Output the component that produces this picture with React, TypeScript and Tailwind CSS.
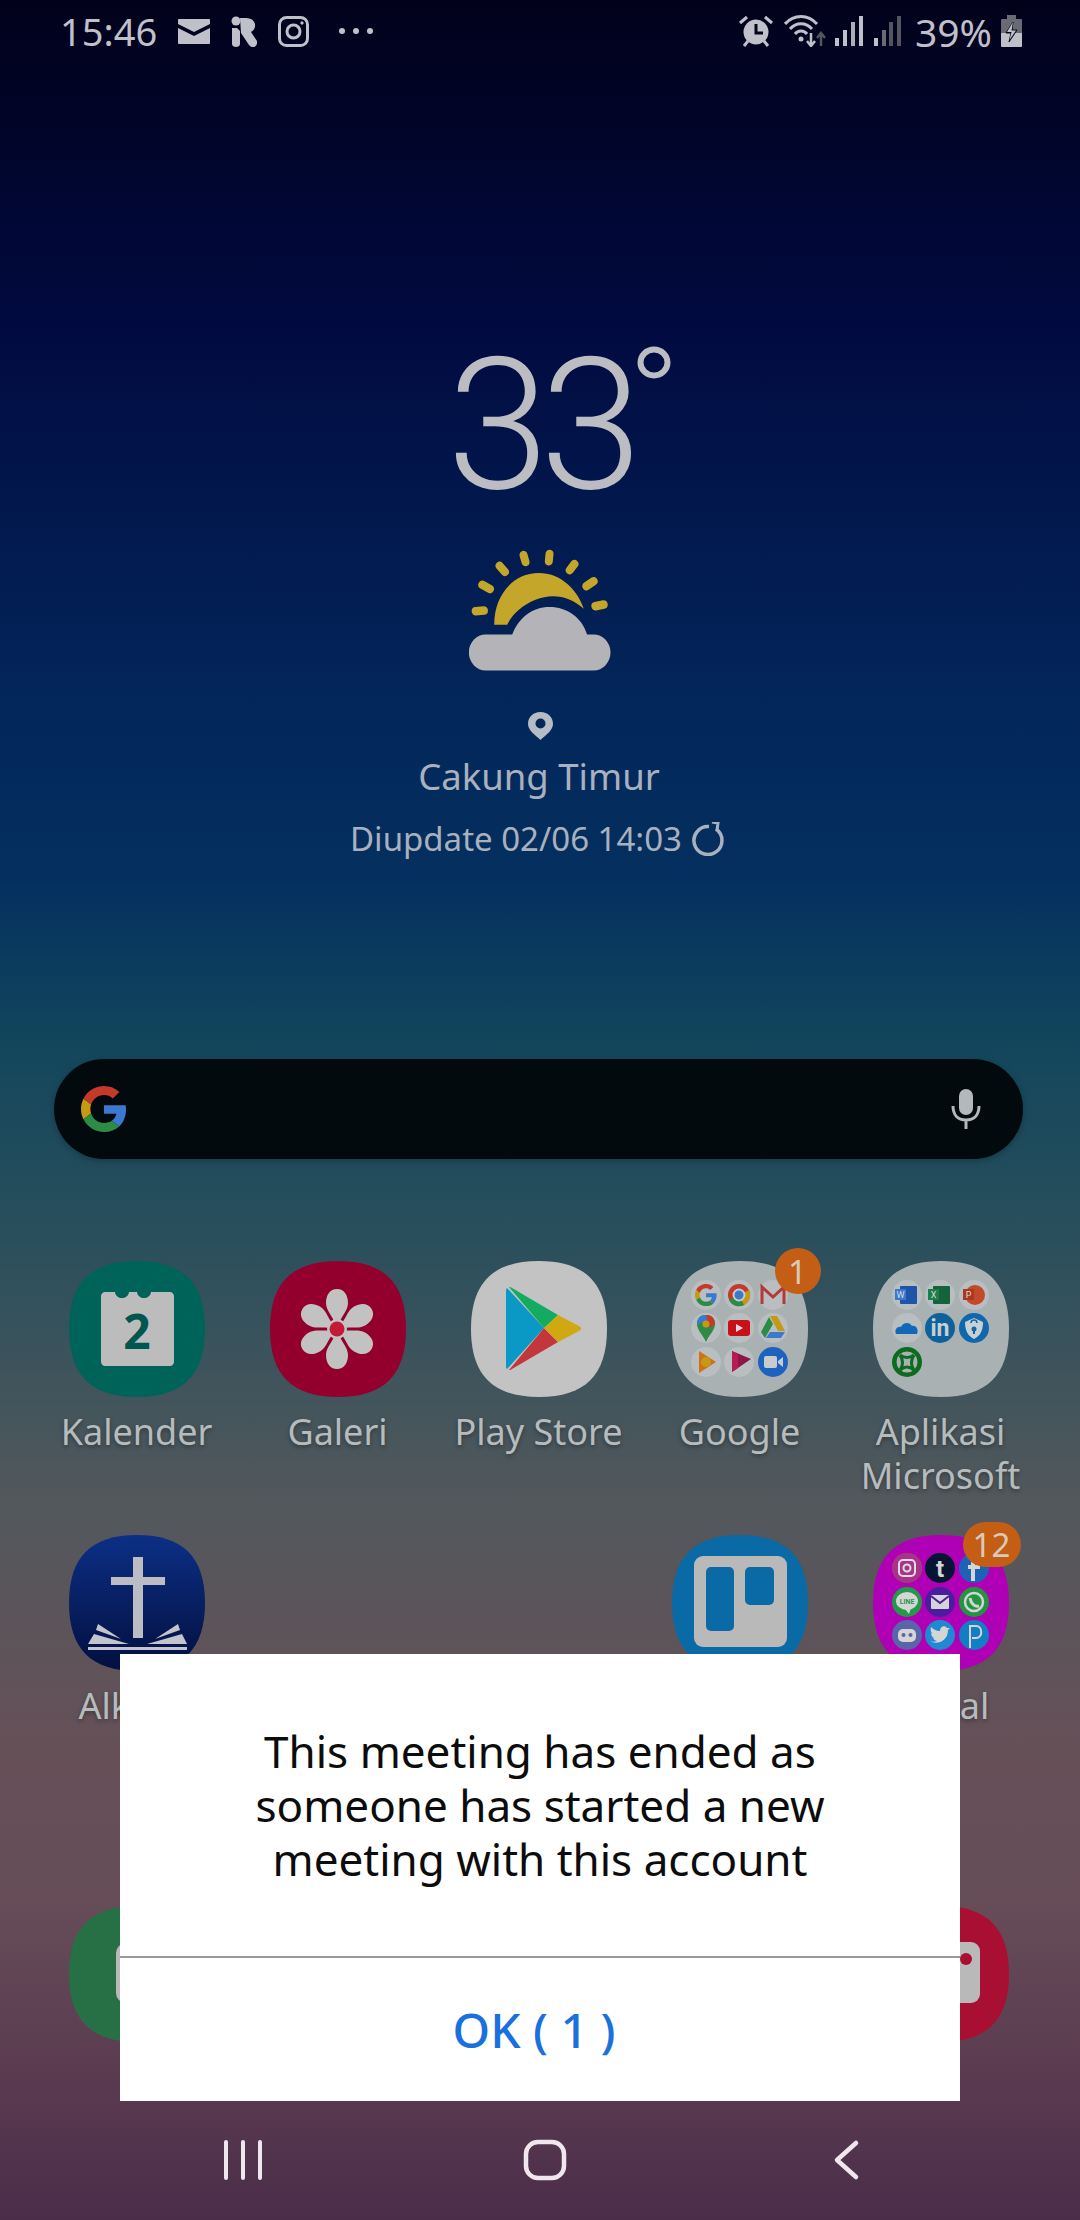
import React from "react";

const Squircle = ({ fill }: { fill: string }) => (
  <path d="M68 0C114 0 136 22 136 68C136 114 114 136 68 136C22 136 0 114 0 68C0 22 22 0 68 0Z" fill={fill} />
);

const GoogleG = ({ size }: { size: number }) => (
  <svg width={size} height={size} viewBox="0 0 48 48">
    <path fill="#c5392b" d="M24 9.5c3.54 0 6.71 1.22 9.21 3.6l6.85-6.85C35.9 2.38 30.47 0 24 0 14.62 0 6.51 5.38 2.56 13.22l7.98 6.19C12.43 13.72 17.74 9.5 24 9.5z" />
    <path fill="#3b78d0" d="M46.98 24.55c0-1.57-.15-3.09-.38-4.55H24v9.02h12.94c-.58 2.96-2.26 5.48-4.78 7.18l7.73 6c4.51-4.18 7.09-10.36 7.09-17.65z" />
    <path fill="#c39a12" d="M10.53 28.59c-.48-1.45-.76-2.99-.76-4.59s.27-3.14.76-4.59l-7.98-6.19C.92 16.46 0 20.12 0 24c0 3.88.92 7.54 2.56 10.78l7.97-6.19z" />
    <path fill="#2e8b45" d="M24 48c6.48 0 11.93-2.13 15.89-5.81l-7.73-6c-2.15 1.45-4.92 2.3-8.16 2.3-6.26 0-11.57-4.22-13.47-9.91l-7.98 6.19C6.51 42.62 14.62 48 24 48z" />
  </svg>
);

const Icon = ({ children }: { children: React.ReactNode }) => (
  <svg width={136} height={136} viewBox="0 0 136 136" className="block">
    {children}
  </svg>
);

const Kalender = () => (
  <Icon>
    <Squircle fill="#00635a" />
    <path d="M36 31h10c1 8 13 8 14 0h8c1 8 13 8 14 0h19c2 0 4 2 4 4v66c0 2-2 4-4 4H36c-2 0-4-2-4-4V35c0-2 2-4 4-4Z" fill="#bcbcbc" />
    <text x="68" y="88" textAnchor="middle" fontSize="48" fontWeight="700" fontFamily="'Noto Sans', sans-serif" fill="#00574f">2</text>
  </Icon>
);

const Galeri = () => (
  <Icon>
    <Squircle fill="#93002e" />
    {[0, 60, 120, 180, 240, 300].map((r) => (
      <path key={r} d="M67 28C74 28 78 34 78 42C78 50 71 55 69 63H65C63 55 56 50 56 42C56 34 60 28 67 28Z" fill="#c2c2c2" transform={`rotate(${r} 67 68)`} />
    ))}
    <circle cx="67" cy="68" r="10" fill="#c2c2c2" />
    <circle cx="67" cy="68" r="7.5" fill="#c41a38" />
  </Icon>
);

const Play = () => (
  <Icon>
    <Squircle fill="#c3c3c3" />
    <path d="M36 27C35 28 35 29 35 31V104C35 106 35 107 36 108L73 67Z" fill="#0a98c4" />
    <path d="M38 26C39 26 40 26 41 27L87 54L73 67Z" fill="#13ab60" />
    <path d="M73 67L38 109C39 109 40 109 41 108L87 81Z" fill="#c3363c" />
    <path d="M87 54L108 65C111 67 111 68 108 70L87 81L73 67Z" fill="#d0a812" />
  </Icon>
);

const Mini = ({ x, y, fill = "#b9bec0", children }: { x: number; y: number; fill?: string; children?: React.ReactNode }) => (
  <g transform={`translate(${x} ${y})`}>
    <circle r="15" fill={fill} />
    {children}
  </g>
);

const GoogleFolder = () => (
  <Icon>
    <Squircle fill="#a9b1b3" />
    <Mini x={34} y={34}>
      <g transform="translate(-11 -11) scale(0.46)">
        <path fill="#c5392b" d="M24 9.5c3.54 0 6.71 1.22 9.21 3.6l6.85-6.85C35.9 2.38 30.47 0 24 0 14.62 0 6.51 5.38 2.56 13.22l7.98 6.19C12.43 13.72 17.74 9.5 24 9.5z" />
        <path fill="#3b78d0" d="M46.98 24.55c0-1.57-.15-3.09-.38-4.55H24v9.02h12.94c-.58 2.96-2.26 5.48-4.78 7.18l7.73 6c4.51-4.18 7.09-10.36 7.09-17.65z" />
        <path fill="#c39a12" d="M10.53 28.59c-.48-1.45-.76-2.99-.76-4.59s.27-3.14.76-4.59l-7.98-6.19C.92 16.46 0 20.12 0 24c0 3.88.92 7.54 2.56 10.78l7.97-6.19z" />
        <path fill="#2e8b45" d="M24 48c6.48 0 11.93-2.13 15.89-5.81l-7.73-6c-2.15 1.45-4.92 2.3-8.16 2.3-6.26 0-11.57-4.22-13.47-9.91l-7.98 6.19C6.51 42.62 14.62 48 24 48z" />
      </g>
    </Mini>
    <Mini x={67} y={34}>
      <circle r="11" fill="#c5392b" />
      <path d="M0 0L-10 5A11 11 0 0 0 5 10Z" fill="#2e8b45" />
      <path d="M0 0L5 10A11 11 0 0 0 10 -5Z" fill="#c39a12" />
      <circle r="5.5" fill="#3b78d0" stroke="#c9cccc" strokeWidth="2" />
    </Mini>
    <Mini x={101} y={34}>
      <path d="M-11 9V-8L0 2L11 -8V9" fill="none" stroke="#b5383a" strokeWidth="3" />
    </Mini>
    <Mini x={34} y={67}>
      <path d="M0 -13C-7 -13 -9 -8 -9 -4C-9 2 -3 7 0 14C3 7 9 2 9 -4C9 -8 7 -13 0 -13Z" fill="#2e8b45" />
      <path d="M-9 -4C-9 -8 -7 -13 0 -13L4 -7Z" fill="#3b78d0" />
      <path d="M0 -13C7 -13 9 -8 9 -4L3 0Z" fill="#c5392b" />
      <circle cy="-4" r="3.5" fill="#c39a12" />
    </Mini>
    <Mini x={67} y={67}>
      <rect x="-11" y="-8" width="22" height="16" rx="3" fill="#c8101a" />
      <path d="M-3 -4L4 0L-3 4Z" fill="#ddd" />
    </Mini>
    <Mini x={101} y={67}>
      <path d="M-3 -12H4L12 3H5Z" fill="#c39a12" />
      <path d="M-4 -11L-12 4L-8 10L0 -4Z" fill="#2e8b45" />
      <path d="M-7 10H8L12 4H-3Z" fill="#3b78d0" />
    </Mini>
    <Mini x={34} y={101}>
      <path d="M-7 -11L10 0L-7 11Z" fill="#d0701a" />
      <circle cx="0" cy="0" r="5" fill="#c39a12" />
    </Mini>
    <Mini x={67} y={101}>
      <path d="M-7 -11L12 -3L-7 10Z" fill="#8d1548" />
      <path d="M-7 -11L-1 -7V6L-7 10Z" fill="#b51c55" />
    </Mini>
    <Mini x={101} y={101} fill="#1e62bf">
      <rect x="-9" y="-6" width="13" height="12" rx="2" fill="#c9cccc" />
      <path d="M5 -1L10 -5V5L5 1Z" fill="#c9cccc" />
    </Mini>
  </Icon>
);

const MsFolder = () => (
  <Icon>
    <Squircle fill="#a9b1b3" />
    <Mini x={34} y={34}>
      <rect x="-7" y="-9" width="17" height="18" rx="1" fill="#1f55a8" />
      <rect x="-12" y="-6" width="11" height="11" fill="#3b78d0" />
      <text x="-6.500" y="3" textAnchor="middle" fontSize="9" fill="#ddd" fontFamily="Roboto, sans-serif">W</text>
    </Mini>
    <Mini x={67} y={34}>
      <rect x="-7" y="-9" width="17" height="18" rx="1" fill="#14633a" />
      <rect x="-12" y="-6" width="11" height="11" fill="#1b7f4a" />
      <text x="-6.500" y="3" textAnchor="middle" fontSize="9" fill="#ddd" fontFamily="Roboto, sans-serif">X</text>
    </Mini>
    <Mini x={101} y={34}>
      <circle cx="1" r="10" fill="#c24a2a" />
      <rect x="-11" y="-6" width="11" height="11" fill="#a8391c" />
      <text x="-5.500" y="3" textAnchor="middle" fontSize="9" fill="#ddd" fontFamily="Roboto, sans-serif">P</text>
    </Mini>
    <Mini x={34} y={67}>
      <path d="M-11 6C-13 1 -9 -2 -6 -1C-4 -6 3 -6 5 -2C9 -3 12 2 10 6Z" fill="#1268b8" />
    </Mini>
    <Mini x={67} y={67} fill="#0d629c">
      <text x="0" y="8" textAnchor="middle" fontSize="23" fontWeight="700" fill="#c9d0d3" fontFamily="Roboto, sans-serif">in</text>
    </Mini>
    <Mini x={101} y={67} fill="#0f67ae">
      <path d="M0 -10L9 -6C9 3 6 8 0 11C-6 8 -9 3 -9 -6Z" fill="#c9d0d3" />
      <circle cy="1" r="2.500" fill="#0f67ae" />
      <rect x="-1" y="1" width="2" height="5" fill="#0f67ae" />
      <path d="M-3 -5A3 3 0 0 1 3 -5" stroke="#0f67ae" strokeWidth="1.600" fill="none" />
    </Mini>
    <Mini x={34} y={101} fill="#0c6b1e">
      <circle r="10.500" fill="#a9b1b3" />
      <path d="M-7 -7Q0 -2 7 -7M-7 8Q0 2 7 8M-7 -7Q-2 1 -7 8M7 -7Q2 1 7 8" stroke="#0c6b1e" strokeWidth="3" fill="none" />
    </Mini>
  </Icon>
);

const Alkitab = () => (
  <Icon>
    <defs>
      <linearGradient id="alk" x1="0" y1="0" x2="0" y2="1">
        <stop offset="0" stopColor="#0c2f85" />
        <stop offset="1" stopColor="#030f3f" />
      </linearGradient>
    </defs>
    <Squircle fill="url(#alk)" />
    <rect x="64" y="22" width="10" height="81" fill="#bcbcc4" />
    <rect x="42" y="42" width="54" height="8" fill="#bcbcc4" />
    <path d="M25 99L60 109H19Z" fill="#c4c4cc" />
    <path d="M29 89L52 104L27 95Z" fill="#c4c4cc" />
    <path d="M113 99L78 109H118Z" fill="#c4c4cc" />
    <path d="M109 89L86 104L111 95Z" fill="#c4c4cc" />
    <rect x="19" y="112" width="99" height="3" fill="#c4c4cc" />
  </Icon>
);

const Trello = () => (
  <Icon>
    <Squircle fill="#0a6aa6" />
    <rect x="22" y="21" width="93" height="91" rx="9" fill="#b9b9b9" />
    <rect x="34" y="32" width="28" height="64" rx="5" fill="#0a6aa6" />
    <rect x="73" y="32" width="29" height="38" rx="5" fill="#0a6aa6" />
  </Icon>
);

const SocialFolder = () => (
  <Icon>
    <Squircle fill="#b000b6" />
    <Mini x={34} y={33} fill="#b35a2a">
      <circle r="15" fill="#a8348a" />
      <rect x="-8" y="-8" width="16" height="16" rx="4" fill="none" stroke="#ddd" strokeWidth="2" />
      <circle r="3.500" fill="none" stroke="#ddd" strokeWidth="2" />
    </Mini>
    <Mini x={67} y={33} fill="#051433">
      <text x="0" y="9" textAnchor="middle" fontSize="24" fontWeight="700" fill="#d5d5d5" fontFamily="Roboto, sans-serif">t</text>
    </Mini>
    <Mini x={101} y={33} fill="#1c63b8">
      <path d="M-1 13V-4C-1 -8 2 -10 6 -9M-6 -1H6" fill="none" stroke="#d5d5d5" strokeWidth="4" />
    </Mini>
    <Mini x={34} y={67} fill="#239a49">
      <ellipse rx="11" ry="9" cy="-1" fill="#d5d5d5" />
      <path d="M-2 7L2 12L4 6Z" fill="#d5d5d5" />
      <text x="0" y="2" textAnchor="middle" fontSize="7" fontWeight="700" fill="#239a49" fontFamily="Roboto, sans-serif">LINE</text>
    </Mini>
    <Mini x={67} y={67} fill="#4a1da0">
      <rect x="-9" y="-7" width="18" height="14" rx="1" fill="#d5d5d5" />
      <path d="M-9 -6L0 1L9 -6" fill="none" stroke="#4a1da0" strokeWidth="2" />
    </Mini>
    <Mini x={101} y={67} fill="#20963f">
      <circle r="9" fill="none" stroke="#d5d5d5" strokeWidth="2.500" />
      <path d="M-4 -4C-3 2 1 5 5 4" fill="none" stroke="#d5d5d5" strokeWidth="3" />
    </Mini>
    <Mini x={34} y={100} fill="#5a64a8">
      <rect x="-9" y="-6" width="18" height="13" rx="5" fill="#d5d5d5" />
      <circle cx="-3.500" cy="0" r="2" fill="#5a64a8" />
      <circle cx="3.500" cy="0" r="2" fill="#5a64a8" />
    </Mini>
    <Mini x={67} y={100} fill="#1f8ad0">
      <path d="M-10 6C-4 10 8 7 8 -5L10 -7L7 -7C5 -10 0 -9 0 -4C-4 -4 -7 -6 -9 -8C-10 -5 -9 -2 -7 -1L-9 -2C-9 1 -7 3 -5 3L-7 3C-6 5 -4 6 -3 6C-5 7 -8 7 -10 6Z" fill="#d5d5d5" />
    </Mini>
    <Mini x={101} y={100} fill="#127fc4">
      <path d="M-4 13V-9H2C9 -9 9 3 2 3H-2" fill="none" stroke="#d5d5d5" strokeWidth="2" />
    </Mini>
  </Icon>
);

const Phone = () => (
  <Icon>
    <Squircle fill="#276f45" />
    <rect x="47" y="37" width="60" height="60" rx="10" fill="#b9b9b9" />
  </Icon>
);

const Camera = () => (
  <Icon>
    <Squircle fill="#a90f33" />
    <rect x="30" y="36" width="77" height="61" rx="9" fill="#b9b9b9" />
    <circle cx="93" cy="53" r="6" fill="#a90f33" />
  </Icon>
);

const Badge = ({ label, className }: { label: string; className: string }) => (
  <div className={`absolute flex items-center justify-center rounded-full bg-[#c35e14] text-[#d8cabb] text-[33px] leading-none ${className}`}>
    {label}
  </div>
);

const AppCell = ({ icon, label, badge }: { icon: React.ReactNode; label?: string; badge?: React.ReactNode }) => (
  <div className="flex flex-col items-center">
    <div className="relative h-[136px] w-[136px]">
      {icon}
      {badge}
    </div>
    {label && (
      <div className="mt-[13px] w-[196px] text-center text-[36px] leading-[44px] text-[#b6bcbe] [text-shadow:0_2px_4px_rgba(0,0,0,0.35)]">
        {label}
      </div>
    )}
  </div>
);

export default function App() {
  return (
    <div className="relative flex h-[2220px] w-[1080px] flex-col overflow-hidden bg-[linear-gradient(180deg,#01011a_0px,#010a40_320px,#03265a_700px,#04305f_880px,#12465c_1040px,#2a4f5c_1240px,#52585c_1500px,#665058_1750px,#664d58_1900px,#5a3a50_2080px,#4b2d4a_2220px)] font-['Noto_Sans','Open_Sans',sans-serif]">
      {/* status bar */}
      <div className="flex h-[62px] items-center pl-[60px] pr-[58px] text-[#c0c0ca]">
        <span className="text-[38px] leading-none">15:46</span>
        <svg width="32" height="25" viewBox="0 0 32 25" className="ml-[21px]">
          <path d="M1 0H31A1 1 0 0 1 32 1V5L16 13L0 5V1A1 1 0 0 1 1 0ZM0 9L16 17L32 9V24A1 1 0 0 1 31 25H1A1 1 0 0 1 0 24Z" fill="#c0c0ca" />
        </svg>
        <svg width="26" height="31" viewBox="0 0 26 31" className="ml-[21px]">
          <circle cx="5" cy="5" r="4.500" fill="#c0c0ca" />
          <path d="M1 12H6L9 15V28C9 30 7 31 5 31C3 31 1 30 1 28Z" fill="#c0c0ca" />
          <path d="M9 2H15C25 2 27 12 20 16L26 25C27 31 21 33 18 29L10 17Z" fill="#c0c0ca" />
        </svg>
        <svg width="31" height="31" viewBox="0 0 31 31" className="ml-[21px]" fill="none" stroke="#c0c0ca" strokeWidth="3">
          <rect x="1.500" y="1.500" width="28" height="28" rx="7" />
          <circle cx="15.500" cy="15.500" r="6.500" />
          <circle cx="24" cy="7" r="1.200" fill="#c0c0ca" strokeWidth="1" />
        </svg>
        <svg width="34" height="8" viewBox="0 0 34 8" className="ml-[30px]" fill="#c0c0ca">
          <circle cx="3" cy="4" r="3" />
          <circle cx="17" cy="4" r="3" />
          <circle cx="31" cy="4" r="3" />
        </svg>
        <svg width="34" height="32" viewBox="0 0 34 32" className="ml-auto">
          <circle cx="17" cy="17" r="12.500" fill="#c0c0ca" />
          <path d="M17 9V18H24" stroke="#03031c" strokeWidth="3" fill="none" />
          <path d="M1 8L8 2M33 8L26 2M5 31L9 26M29 31L25 26" stroke="#c0c0ca" strokeWidth="3" />
        </svg>
        <svg width="42" height="32" viewBox="0 0 42 32" className="ml-[11px]" fill="none">
          <path d="M1 9C10 -1 24 -1 33 9" stroke="#c0c0ca" strokeWidth="3" />
          <path d="M6 14C12 7 22 7 28 14" stroke="#c0c0ca" strokeWidth="3" />
          <path d="M11 19C14 15 20 15 23 19" stroke="#c0c0ca" strokeWidth="3" />
          <circle cx="17" cy="24" r="2.500" fill="#c0c0ca" />
          <path d="M27 18V30M23 26L27 31L31 26" stroke="#c0c0ca" strokeWidth="2.500" />
          <path d="M37 31V19M33 23L37 18L41 23" stroke="#55555f" strokeWidth="2.500" />
        </svg>
        <svg width="28" height="30" viewBox="0 0 28 30" className="ml-[9px]" fill="#c0c0ca">
          <rect x="0" y="22" width="4" height="8" />
          <rect x="8" y="14" width="4" height="16" />
          <rect x="16" y="6" width="4" height="24" opacity="0.9" />
          <rect x="24" y="0" width="4" height="30" />
        </svg>
        <svg width="27" height="30" viewBox="0 0 27 30" className="ml-[11px]">
          <rect x="0" y="22" width="4" height="8" fill="#c0c0ca" />
          <rect x="8" y="14" width="4" height="16" fill="#6a6a75" />
          <rect x="15" y="6" width="4" height="24" fill="#55555f" />
          <rect x="23" y="0" width="4" height="30" fill="#55555f" />
        </svg>
        <span className="ml-[14px] text-[39px] leading-none">39%</span>
        <svg width="21" height="32" viewBox="0 0 21 32" className="ml-[9px]">
          <rect x="6" y="0" width="9" height="4" fill="#6a6a75" />
          <path d="M1 4H20A1 1 0 0 1 21 5V18H0V5A1 1 0 0 1 1 4Z" fill="#6a6a75" />
          <path d="M0 18H21V31A1 1 0 0 1 20 32H1A1 1 0 0 1 0 31Z" fill="#c0c0ca" />
          <path d="M12 7L5 18H10L8 27L16 15H11Z" fill="#0a0a1c" stroke="#0a0a1c" />
          <path d="M12 7L6 17H10.500L8.500 25L15 15.500H10.500Z" fill="#c0c0ca" />
        </svg>
      </div>

      {/* weather */}
      <div className="flex flex-col items-center text-[#b6bcc6]">
        <div className="relative mt-[288px] h-[150px] text-[184px] leading-[150px] font-light tracking-[-9px] font-['Roboto',sans-serif] text-[#bcbdc3]">
          33
          <svg width="34" height="33" viewBox="0 0 34 33" className="absolute left-[190px] top-[-4px]" fill="none" stroke="#bcbdc3" strokeWidth="6">
            <ellipse cx="17" cy="16.500" rx="13.500" ry="13" />
          </svg>
        </div>
        <svg width="143" height="125" viewBox="440 635 430 350" preserveAspectRatio="none" className="mt-[48px]">
          <path d="M516 850C515 770 570 705 650 705C715 705 765 750 785 805C745 770 690 760 640 780C600 795 570 820 555 850Z" fill="#c4a62a" />
          <g stroke="#c4a62a" strokeWidth="24" strokeLinecap="round">
            <path d="M460 812L485 810M480 738L503 750M532 685L548 702M604 655L610 674M682 652L680 672M757 680L743 697M815 728L793 742M820 798L845 793" />
          </g>
          <path d="M490 978H815A50 50 0 0 0 815 877H795C780 830 735 800 682 800C630 800 590 830 570 877H490A50 50 0 0 0 490 978Z" fill="#b4b4b8" />
        </svg>
        <svg width="25" height="28" viewBox="0 0 25 28" className="mt-[39px]">
          <path d="M12.500 0C20 0 25 5 25 12C25 18 18 23 12.500 28C7 23 0 18 0 12C0 5 5 0 12.500 0Z" fill="#b6bcc6" />
          <circle cx="12.500" cy="11.500" r="5" fill="#052657" />
        </svg>
        <div className="mt-[14px] mr-[2px] text-[36.500px] leading-[44px] text-[#a9b1be]">Cakung Timur</div>
        <div className="mt-[19px] mr-[6px] flex items-center text-[33px] leading-[44px] text-[#a9b1be]">
          <span>Diupdate 02/06 14:03</span>
          <svg width="34" height="34" viewBox="0 0 34 34" fill="none" stroke="#a9b1be" strokeWidth="3.500" className="ml-[8px]">
            <path d="M19 4.500A14 14 0 1 0 26 7" />
            <path d="M22 0L28 1L27 8" strokeWidth="3" />
          </svg>
        </div>
      </div>

      {/* search */}
      <div className="ml-[54px] mr-[57px] mt-[198px] flex h-[100px] items-center justify-between rounded-full bg-[#020a0e] pl-[27px] pr-[42px] shadow-[0_2px_6px_rgba(0,0,0,0.25)]">
        <GoogleG size={46} />
        <svg width="30" height="40" viewBox="0 0 30 40" fill="none">
          <rect x="8" y="0" width="14" height="26" rx="7" fill="#b4b8ba" />
          <path d="M2 17C2 26 7 31 15 31C23 31 28 26 28 17M15 31V40" stroke="#b4b8ba" strokeWidth="3" />
        </svg>
      </div>

      {/* app grid */}
      <div className="mt-[102px] grid auto-rows-[274px] grid-cols-[repeat(5,201px)] pl-[36px]">
        <AppCell icon={<Kalender />} label="Kalender" />
        <AppCell icon={<Galeri />} label="Galeri" />
        <AppCell icon={<Play />} label="Play Store" />
        <AppCell icon={<GoogleFolder />} label="Google" badge={<Badge label="1" className="left-[103px] top-[-13px] h-[46px] w-[46px]" />} />
        <AppCell icon={<MsFolder />} label="Aplikasi Microsoft" />
        <AppCell icon={<Alkitab />} label="Alkitab" />
        <div />
        <div />
        <AppCell icon={<Trello />} />
        <AppCell icon={<SocialFolder />} label="Sosial" badge={<Badge label="12" className="left-[90px] top-[-13px] h-[45px] w-[58px]" />} />
      </div>

      {/* dock */}
      <div className="mt-[97px] grid grid-cols-[repeat(5,201px)] pl-[36px]">
        <div className="flex justify-center"><Phone /></div>
        <div />
        <div />
        <div />
        <div className="flex justify-center"><Camera /></div>
      </div>

      {/* nav bar */}
      <div className="mt-auto flex items-center justify-between pb-[39px] pl-[221px] pr-[212px]">
        <svg width="44" height="42" viewBox="0 0 44 42" fill="none" stroke="#efe6ee" strokeWidth="4" strokeLinecap="round">
          <path d="M5 3V39M22 3V39M39 3V39" />
        </svg>
        <svg width="44" height="42" viewBox="0 0 44 42" fill="none" stroke="#efe6ee" strokeWidth="4.500">
          <rect x="3" y="3" width="38" height="36" rx="12" />
        </svg>
        <svg width="44" height="42" viewBox="0 0 44 42" fill="none" stroke="#efe6ee" strokeWidth="4.500" strokeLinecap="round" strokeLinejoin="round">
          <path d="M32 4L13 21L32 38" />
        </svg>
      </div>

      {/* dialog */}
      <div className="absolute left-[120px] top-[1654px] flex h-[447px] w-[840px] flex-col bg-white">
        <div className="flex h-[302px] items-center justify-center text-center text-[44px] leading-[54px] text-[#0c0c0c]">
          <div>
            This meeting has ended as
            <br />
            someone has started a new
            <br />
            meeting with this account
          </div>
        </div>
        <div className="h-[2px] bg-[#9a9a9a]" />
        <div className="flex flex-1 items-center justify-center pr-[12px] text-[48px] font-medium text-[#1a70dc]">OK ( 1 )</div>
      </div>
    </div>
  );
}
